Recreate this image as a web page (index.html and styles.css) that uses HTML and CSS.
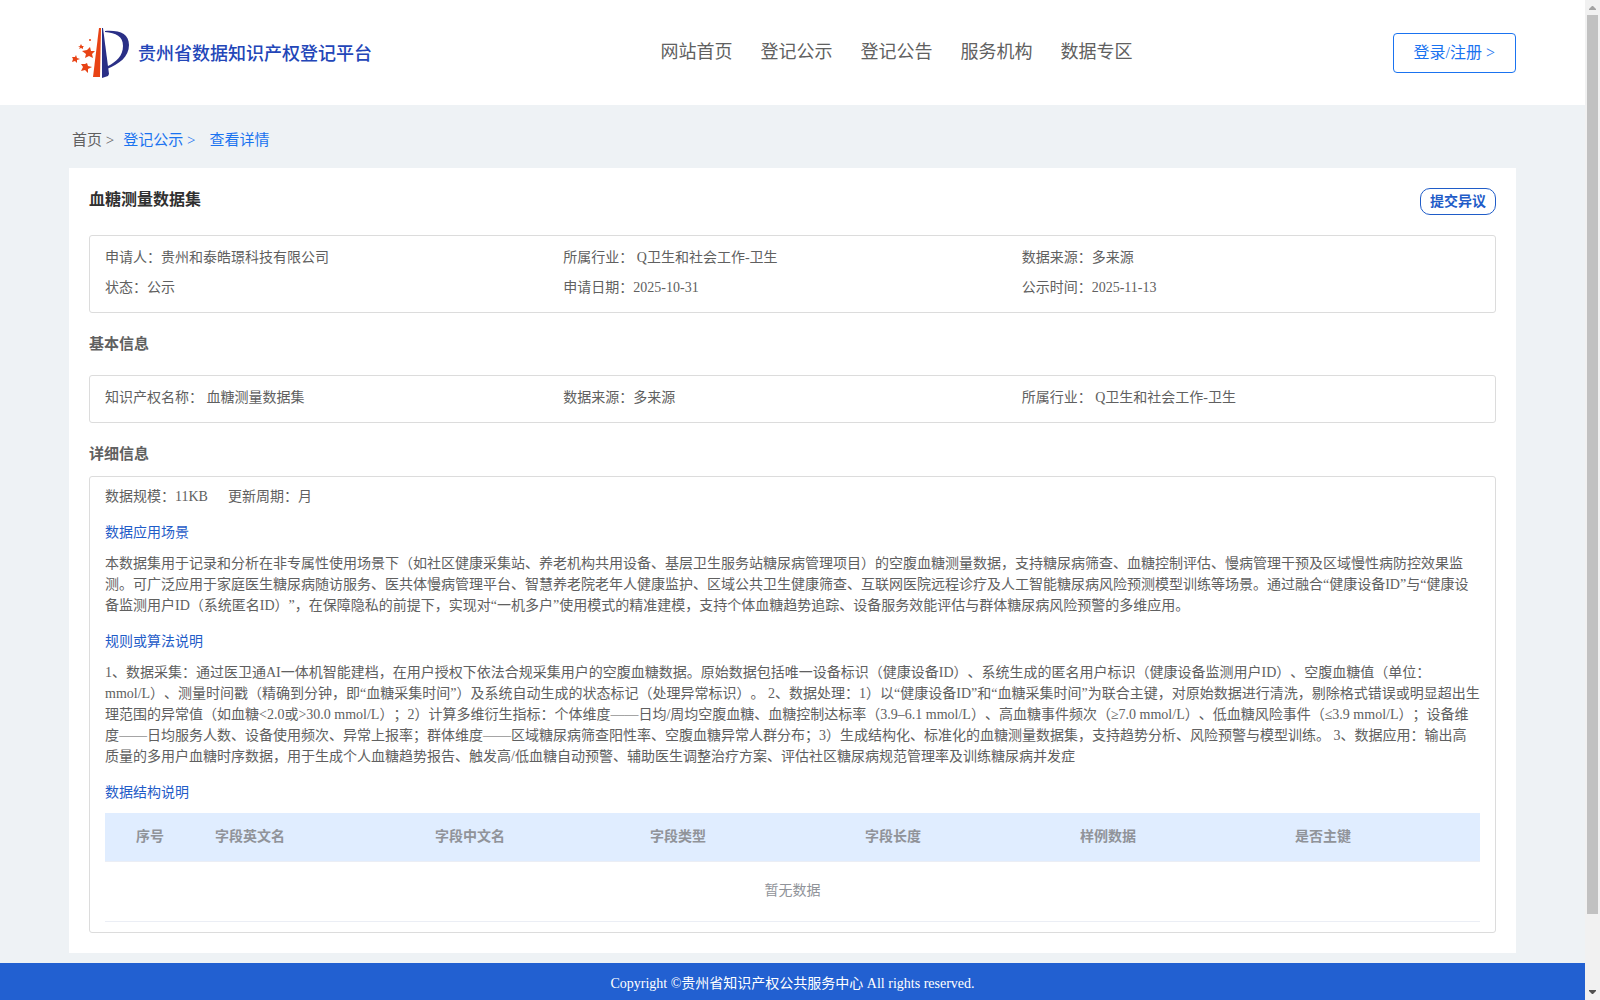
FILE: index.html
```html
<!DOCTYPE html>
<html lang="zh-CN">
<head>
  <meta charset="UTF-8">
  <meta name="viewport" content="width=device-width, initial-scale=1.0">
  <title>贵州省数据知识产权登记平台</title>
  <link rel="stylesheet" href="styles.css">
</head>
<body>
  <div class="page">
    <header class="header">
      <a class="brand" href="#">
        <svg class="brand-logo" viewBox="0 0 58 50" aria-hidden="true">
          <path fill="#e84315" d="M27 0h2l-1 49h-7z"/>
          <path fill="#2a2f86" d="M30 0h1l6 46-1 2-6 2z"/>
          <path fill="#2a2f86" d="M33 3c15-1 24 3 24 14 0 12-10 19-22 24l1-3c8-4 15-10 15-20C51 8 44 5 33 4z"/>
          <g fill="#e84315">
            <path d="M18 19l1 4h4l-3 3 1 4-4-2-4 2 1-4-4-3 5-1z"/>
            <path d="M4 27l1 3 3 1-3 1v3l-2-2-3 1 1-3-1-2h3z"/>
            <path d="M15 35l1 3 4 1-4 2v4l-3-3-4 1 2-4-2-3h4z"/>
            <path d="M9 16l1 2h2l-1 1v2l-2-1-2 1 1-2-2-1h2z"/>
            <circle cx="18" cy="12" r="1"/>
          </g>
        </svg>
        <span class="brand-name">贵州省数据知识产权登记平台</span>
      </a>
      <nav class="nav">
        <a href="#">网站首页</a>
        <a href="#">登记公示</a>
        <a href="#">登记公告</a>
        <a href="#">服务机构</a>
        <a href="#">数据专区</a>
      </nav>
      <button class="login-btn" type="button">登录/注册 &gt;</button>
    </header>

    <main class="main">
      <div class="crumbs">
        <a class="crumb-home" href="#">首页 &gt;</a>
        <a href="#">登记公示 &gt;</a>
        <a class="crumb-last" href="#">查看详情</a>
      </div>

      <div class="card">
        <div class="card-top">
          <h1>血糖测量数据集</h1>
          <button class="objection-btn" type="button">提交异议</button>
        </div>

        <div class="box info-grid">
          <div>申请人：贵州和泰皓璟科技有限公司</div>
          <div>所属行业： Q卫生和社会工作-卫生</div>
          <div>数据来源：多来源</div>
          <div>状态：公示</div>
          <div>申请日期：2025-10-31</div>
          <div>公示时间：2025-11-13</div>
        </div>

        <h2 class="basic-title">基本信息</h2>
        <div class="box info-grid">
          <div>知识产权名称： 血糖测量数据集</div>
          <div>数据来源：多来源</div>
          <div>所属行业： Q卫生和社会工作-卫生</div>
        </div>

        <h2 class="detail-title">详细信息</h2>
        <div class="box detail">
          <div class="scale">
            <span>数据规模：11KB</span>
            <span>更新周期：月</span>
          </div>

          <h3>数据应用场景</h3>
          <p>本数据集用于记录和分析在非专属性使用场景下（如社区健康采集站、养老机构共用设备、基层卫生服务站糖尿病管理项目）的空腹血糖测量数据，支持糖尿病筛查、血糖控制评估、慢病管理干预及区域慢性病防控效果监测。可广泛应用于家庭医生糖尿病随访服务、医共体慢病管理平台、智慧养老院老年人健康监护、区域公共卫生健康筛查、互联网医院远程诊疗及人工智能糖尿病风险预测模型训练等场景。通过融合“健康设备ID”与“健康设备监测用户ID（系统匿名ID）”，在保障隐私的前提下，实现对“一机多户”使用模式的精准建模，支持个体血糖趋势追踪、设备服务效能评估与群体糖尿病风险预警的多维应用。</p>

          <h3>规则或算法说明</h3>
          <p>1、数据采集：通过医卫通AI一体机智能建档，在用户授权下依法合规采集用户的空腹血糖数据。原始数据包括唯一设备标识（健康设备ID）、系统生成的匿名用户标识（健康设备监测用户ID）、空腹血糖值（单位：mmol/L）、测量时间戳（精确到分钟，即“血糖采集时间”）及系统自动生成的状态标记（处理异常标识）。 2、数据处理：1）以“健康设备ID”和“血糖采集时间”为联合主键，对原始数据进行清洗，剔除格式错误或明显超出生理范围的异常值（如血糖&lt;2.0或&gt;30.0 mmol/L）；2）计算多维衍生指标：个体维度——日均/周均空腹血糖、血糖控制达标率（3.9–6.1 mmol/L）、高血糖事件频次（≥7.0 mmol/L）、低血糖风险事件（≤3.9 mmol/L）；设备维度——日均服务人数、设备使用频次、异常上报率；群体维度——区域糖尿病筛查阳性率、空腹血糖异常人群分布；3）生成结构化、标准化的血糖测量数据集，支持趋势分析、风险预警与模型训练。 3、数据应用：输出高质量的多用户血糖时序数据，用于生成个人血糖趋势报告、触发高/低血糖自动预警、辅助医生调整治疗方案、评估社区糖尿病规范管理率及训练糖尿病并发症</p>

          <h3>数据结构说明</h3>
          <table class="fields">
            <thead>
              <tr>
                <th class="col-index">序号</th>
                <th class="col-en">字段英文名</th>
                <th class="col-field">字段中文名</th>
                <th class="col-field">字段类型</th>
                <th class="col-field">字段长度</th>
                <th class="col-field">样例数据</th>
                <th>是否主键</th>
              </tr>
            </thead>
            <tbody>
              <tr>
                <td colspan="7">暂无数据</td>
              </tr>
            </tbody>
          </table>
        </div>
      </div>
    </main>

    <footer class="footer">Copyright ©贵州省知识产权公共服务中心 All rights reserved.</footer>
  </div>

  <div class="scrollbar" aria-hidden="true">
    <svg class="arrow-up" viewBox="0 0 7 4"><path d="M3 0h1l3 3v1H0V3z"/></svg>
    <div class="thumb"></div>
    <svg class="arrow-down" viewBox="0 0 7 4"><path d="M0 0h7v1L4 4H3L0 1z"/></svg>
  </div>
</body>
</html>
```
FILE: styles.css
```css
* {
  box-sizing: border-box;
}

body {
  margin: 0;
  display: flex;
  height: 100vh;
  overflow: hidden;
  font-family: "Liberation Serif", "Noto Sans CJK SC", serif;
  font-size: 14px;
  line-height: 21px;
  color: #606060;
  background: #eef2f5;
  text-spacing-trim: space-all;
}

a {
  color: #1a73f0;
  text-decoration: none;
}

button {
  font-family: inherit;
  background: #fff;
  cursor: pointer;
}

h1, h2, h3, p {
  margin: 0;
}

.page {
  flex: 1;
  min-width: 0;
  display: flex;
  flex-direction: column;
}

/* header */
.header {
  flex: none;
  display: grid;
  grid-template-columns: 1fr auto 1fr;
  align-items: center;
  height: 105px;
  padding: 0 69px;
  background: #fff;
}

.brand {
  display: flex;
  align-items: center;
  gap: 8px;
  padding-left: 3px;
  font-size: 18px;
  font-weight: 500;
  color: #2346b8;
}

.brand-logo {
  width: 58px;
  height: 50px;
}

.brand-name {
  padding-top: 4px;
}

.nav {
  display: flex;
  gap: 28px;
  padding-left: 208px;
}

.nav a {
  font-size: 18px;
  color: #606060;
}

.login-btn {
  justify-self: end;
  height: 40px;
  padding: 0 20px 4px;
  font-size: 16px;
  color: #1a73f0;
  border: 1px solid #1a73f0;
  border-radius: 4px;
}

/* content */
.main {
  flex: none;
  padding: 20px 69px 10px;
}

.crumbs {
  display: flex;
  gap: 9px;
  padding: 0 3px;
  margin-bottom: 13px;
  font-size: 15px;
  line-height: 30px;
}

.crumb-home {
  color: #606060;
}

.crumb-last {
  margin-left: 5px;
}

.card {
  padding: 20px;
  background: #fff;
}

.card-top {
  display: flex;
  justify-content: space-between;
  align-items: flex-start;
  margin-bottom: 20px;
}

.card-top h1 {
  font-size: 16px;
  line-height: 24px;
  color: #303030;
}

.objection-btn {
  height: 27px;
  padding: 0 9px 4px;
  font-size: 14px;
  font-weight: bold;
  color: #1f5cc8;
  border: 1px solid #1f5cc8;
  border-radius: 10px;
}

.box {
  border: 1px solid #dcdcdc;
  border-radius: 3px;
}

.info-grid {
  display: grid;
  grid-template-columns: repeat(3, 1fr);
  padding: 7px 15px 9px;
  line-height: 30px;
}

h2 {
  font-size: 15px;
  line-height: 22px;
}

.basic-title {
  margin: 20px 0;
}

.detail-title {
  margin: 20px 0 11px;
}

.detail {
  padding: 9px 15px 10px;
}

.scale {
  display: flex;
  gap: 20px;
}

.detail h3 {
  margin: 15px 0 10px;
  font-size: 14px;
  font-weight: normal;
  color: #1f5cc8;
}

.fields {
  width: 100%;
  table-layout: fixed;
  border-collapse: collapse;
  color: #909399;
}

.fields th {
  height: 48px;
  padding: 0 0 0 20px;
  text-align: left;
  background: #e0edff;
  border-bottom: 1px solid #ebeef5;
}

.fields td {
  height: 60px;
  padding: 0 0 2px;
  text-align: center;
  border-bottom: 1px solid #ebeef5;
}

.fields .col-index {
  width: 90px;
  padding: 0;
  text-align: center;
}

.col-en {
  width: 220px;
}

.col-field {
  width: 215px;
}

.footer {
  flex: 1 0 auto;
  padding-top: 10px;
  text-align: center;
  color: #fff;
  background: #2260d1;
}

/* scrollbar */
.scrollbar {
  flex: none;
  display: flex;
  flex-direction: column;
  align-items: center;
  width: 15px;
  padding: 6px 0;
  background: #f1f1f1;
}

.scrollbar svg {
  width: 7px;
  height: 4px;
}

.arrow-up {
  fill: #a3a3a3;
}

.arrow-down {
  margin-top: auto;
  fill: #505050;
}

.thumb {
  width: 11px;
  height: 91%;
  margin-top: 5px;
  background: #c1c1c1;
}
```
